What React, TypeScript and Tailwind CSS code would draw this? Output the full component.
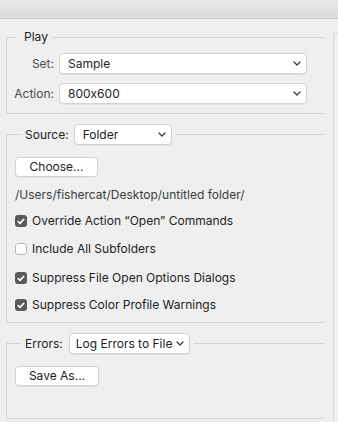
import React from "react";

const font = { fontFamily: '"Inter", "Liberation Sans", sans-serif' };

function Chevron() {
  return (
    <svg width="8" height="5" viewBox="0 0 8 5" className="shrink-0">
      <path d="M1 1 L4 4 L7 1" fill="none" stroke="#3a3a3a" strokeWidth="1.3" strokeLinecap="round" strokeLinejoin="round" />
    </svg>
  );
}

function Select({ value, className }: { value: string; className: string }) {
  return (
    <div
      className={`flex items-center justify-between bg-white border border-[#d3d3d3] rounded-[4px] shadow-[0_1px_1px_rgba(0,0,0,0.06)] pr-[5px] text-[12px] leading-[16px] text-[#222] whitespace-nowrap ${className}`}
    >
      <span>{value}</span>
      <Chevron />
    </div>
  );
}

function Button({ label, className }: { label: string; className: string }) {
  return (
    <div
      className={`flex items-center justify-center bg-white border border-[#d3d3d3] rounded-[4px] shadow-[0_1px_1px_rgba(0,0,0,0.06)] text-[12px] leading-[16px] text-[#222] ${className}`}
    >
      {label}
    </div>
  );
}

function Check({ checked, label, className = "" }: { checked: boolean; label: string; className?: string }) {
  return (
    <div className={`flex items-center h-[16px] ${className}`}>
      {checked ? (
        <div className="w-[12px] h-[12px] rounded-[3px] bg-[#5a5a5a] flex items-center justify-center">
          <svg width="8" height="7" viewBox="0 0 8 7">
            <path d="M1.2 3.6 L3.1 5.4 L6.8 1.3" fill="none" stroke="#fff" strokeWidth="1.6" strokeLinecap="round" strokeLinejoin="round" />
          </svg>
        </div>
      ) : (
        <div className="w-[12px] h-[12px] rounded-[3px] bg-white border border-[#b8b8b8]" />
      )}
      <span className="ml-[5px] text-[12px] leading-[16px] text-[#222] whitespace-nowrap">{label}</span>
    </div>
  );
}

export default function App() {
  return (
    <div style={font} className="w-[338px] h-[422px] overflow-hidden bg-[#efefef] flex flex-col [font-feature-settings:'calt'_0]">
      <div className="h-[19px] shrink-0 bg-gradient-to-b from-[#e8e8e8] to-[#dadada] border-b border-[#c9c9c9]" />
      <div className="flex flex-1 min-h-0">
        <div className="w-[318px] ml-[6px] shrink-0 flex flex-col">
          {/* Play */}
          <fieldset className="mt-[10px] border-l border-t border-b border-[#d4d4d4] pl-[8px] pr-[17px] pb-[9px]">
            <legend className="pl-[9px] pr-[5px] text-[12px] leading-[16px] text-[#222]">Play</legend>
            <div className="mt-[8px] flex items-center">
              <div className="w-[39px] text-right text-[12px] leading-[16px] text-[#4a4a4a]">Set:</div>
              <Select value="Sample" className="ml-[5px] w-[248px] h-[21px] pl-[8px]" />
            </div>
            <div className="mt-[9px] flex items-center">
              <div className="w-[39px] text-right text-[12px] leading-[16px] text-[#4a4a4a] whitespace-nowrap flex justify-end">Action:</div>
              <Select value="800x600" className="ml-[5px] w-[248px] h-[21px] pl-[8px]" />
            </div>
          </fieldset>

          {/* Source */}
          <fieldset className="mt-[10px] border-l border-t border-b border-[#d4d4d4] pl-[8px] pb-[9px]">
            <legend className="ml-[6px] px-[4px]">
              <div className="flex items-center">
                <span className="text-[12px] leading-[16px] text-[#222]">Source:</span>
                <Select value="Folder" className="ml-[5px] w-[98px] h-[21px] pl-[8px]" />
              </div>
            </legend>
            <Button label="Choose..." className="mt-[12px] w-[83px] h-[20px]" />
            <div className="mt-[10px] text-[12px] leading-[16px] text-[#3c3c3c] whitespace-nowrap">/Users/fishercat/Desktop/untitled folder/</div>
            <Check checked label={"Override Action \u201COpen\u201D Commands"} className="mt-[10px]" />
            <Check checked={false} label="Include All Subfolders" className="mt-[12px]" />
            <Check checked label="Suppress File Open Options Dialogs" className="mt-[13px]" />
            <Check checked label="Suppress Color Profile Warnings" className="mt-[11px]" />
          </fieldset>

          {/* Errors */}
          <fieldset className="mt-[10px] border-l border-t border-b border-[#d4d4d4] pl-[8px] pb-[32px]">
            <legend className="ml-[6px] px-[4px]">
              <div className="flex items-center">
                <span className="text-[12px] leading-[16px] text-[#222]">Errors:</span>
                <Select value="Log Errors to File" className="ml-[6px] w-[121px] h-[21px] pl-[6px]" />
              </div>
            </legend>
            <Button label="Save As..." className="mt-[12px] w-[84px] h-[20px]" />
          </fieldset>
        </div>
        <div className="ml-[9px] mt-[14px] flex-1 border-l border-t border-[#d8d8d8] bg-[#efefef]" />
      </div>
    </div>
  );
}
